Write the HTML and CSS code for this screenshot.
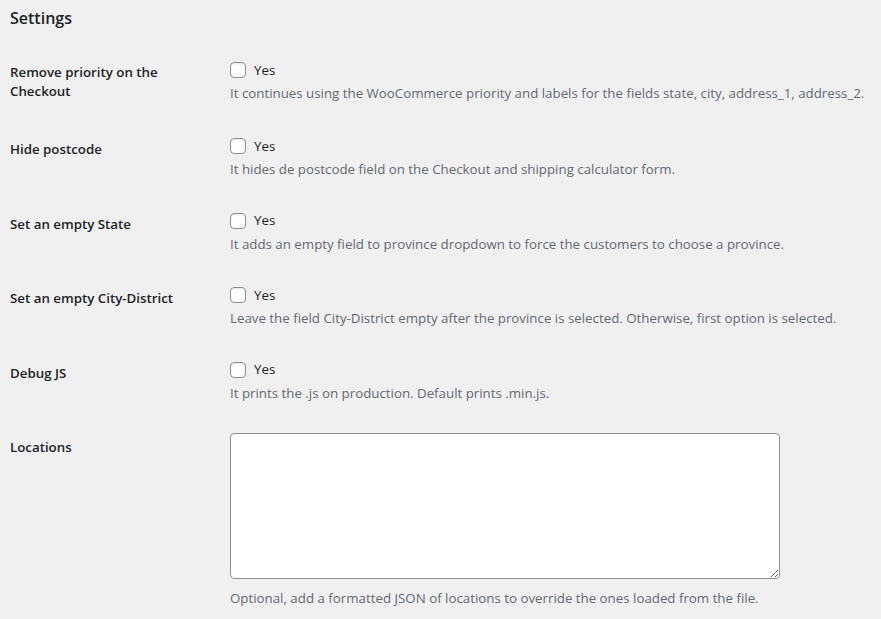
FILE: index.html
```html
<!DOCTYPE html>
<html lang="en">
<head>
<meta charset="utf-8">
<title>Settings</title>
<link rel="stylesheet" href="styles.css">
</head>
<body>
<div class="wrap">
  <h2 class="title">Settings</h2>
  <table class="form-table">
    <tbody>
      <tr>
        <th>Remove priority on the Checkout</th>
        <td>
          <label class="check"><span class="box"></span>Yes</label>
          <p class="description">It continues using the WooCommerce priority and labels for the fields state, city, address_1, address_2.</p>
        </td>
      </tr>
      <tr>
        <th>Hide postcode</th>
        <td>
          <label class="check"><span class="box"></span>Yes</label>
          <p class="description">It hides de postcode field on the Checkout and shipping calculator form.</p>
        </td>
      </tr>
      <tr>
        <th>Set an empty State</th>
        <td>
          <label class="check"><span class="box"></span>Yes</label>
          <p class="description">It adds an empty field to province dropdown to force the customers to choose a province.</p>
        </td>
      </tr>
      <tr>
        <th>Set an empty City-District</th>
        <td>
          <label class="check"><span class="box"></span>Yes</label>
          <p class="description">Leave the field City-District empty after the province is selected. Otherwise, first option is selected.</p>
        </td>
      </tr>
      <tr>
        <th>Debug JS</th>
        <td>
          <label class="check"><span class="box"></span>Yes</label>
          <p class="description">It prints the .js on production. Default prints .min.js.</p>
        </td>
      </tr>
      <tr>
        <th>Locations</th>
        <td class="top">
          <textarea class="locations"></textarea>
          <p class="description">Optional, add a formatted JSON of locations to override the ones loaded from the file.</p>
        </td>
      </tr>
    </tbody>
  </table>
</div>
</body>
</html>
```
FILE: styles.css
```css
html, body {
  margin: 0;
  padding: 0;
  background: #f0f0f1;
}
body {
  font-family: "Open Sans", "Noto Sans", sans-serif;
  color: #1d2327;
  font-size: 14px;
  overflow: hidden;
}
.wrap {
  padding: 0 10px;
}
.title {
  margin: 0;
  padding-top: 6px;
  font-size: 16px;
  font-weight: 600;
  line-height: 24px;
  height: 37px;
}
.form-table {
  border-collapse: collapse;
  table-layout: fixed;
  width: 900px;
}
.form-table th {
  width: 200px;
  padding: 20px 10px 20px 0;
  text-align: left;
  vertical-align: top;
  font-weight: 600;
  font-size: 13.3px;
  line-height: 18.5px;
}
.form-table td {
  padding: 15px 10px;
  vertical-align: middle;
  line-height: 1.4;
  font-size: 13.3px;
}
.check {
  display: flex;
  align-items: center;
  height: 22px;
  gap: 8px;
}
.box {
  width: 14px;
  height: 14px;
  border: 1px solid #8c8f94;
  border-radius: 4px;
  background: #fff;
  box-shadow: inset 0 1px 2px rgba(0,0,0,.1);
  flex: none;
}
.description {
  margin: 3px 0 0;
  color: #646970;
  line-height: 19.6px;
  white-space: nowrap;
}
.locations {
  display: block;
  box-sizing: border-box;
  width: 550px;
  height: 146px;
  margin: 0;
  border: 1px solid #8c8f94;
  border-radius: 4px;
  background: #fff;
  font-family: inherit;
}
.locations + .description {
  margin-top: 10px;
}
```
